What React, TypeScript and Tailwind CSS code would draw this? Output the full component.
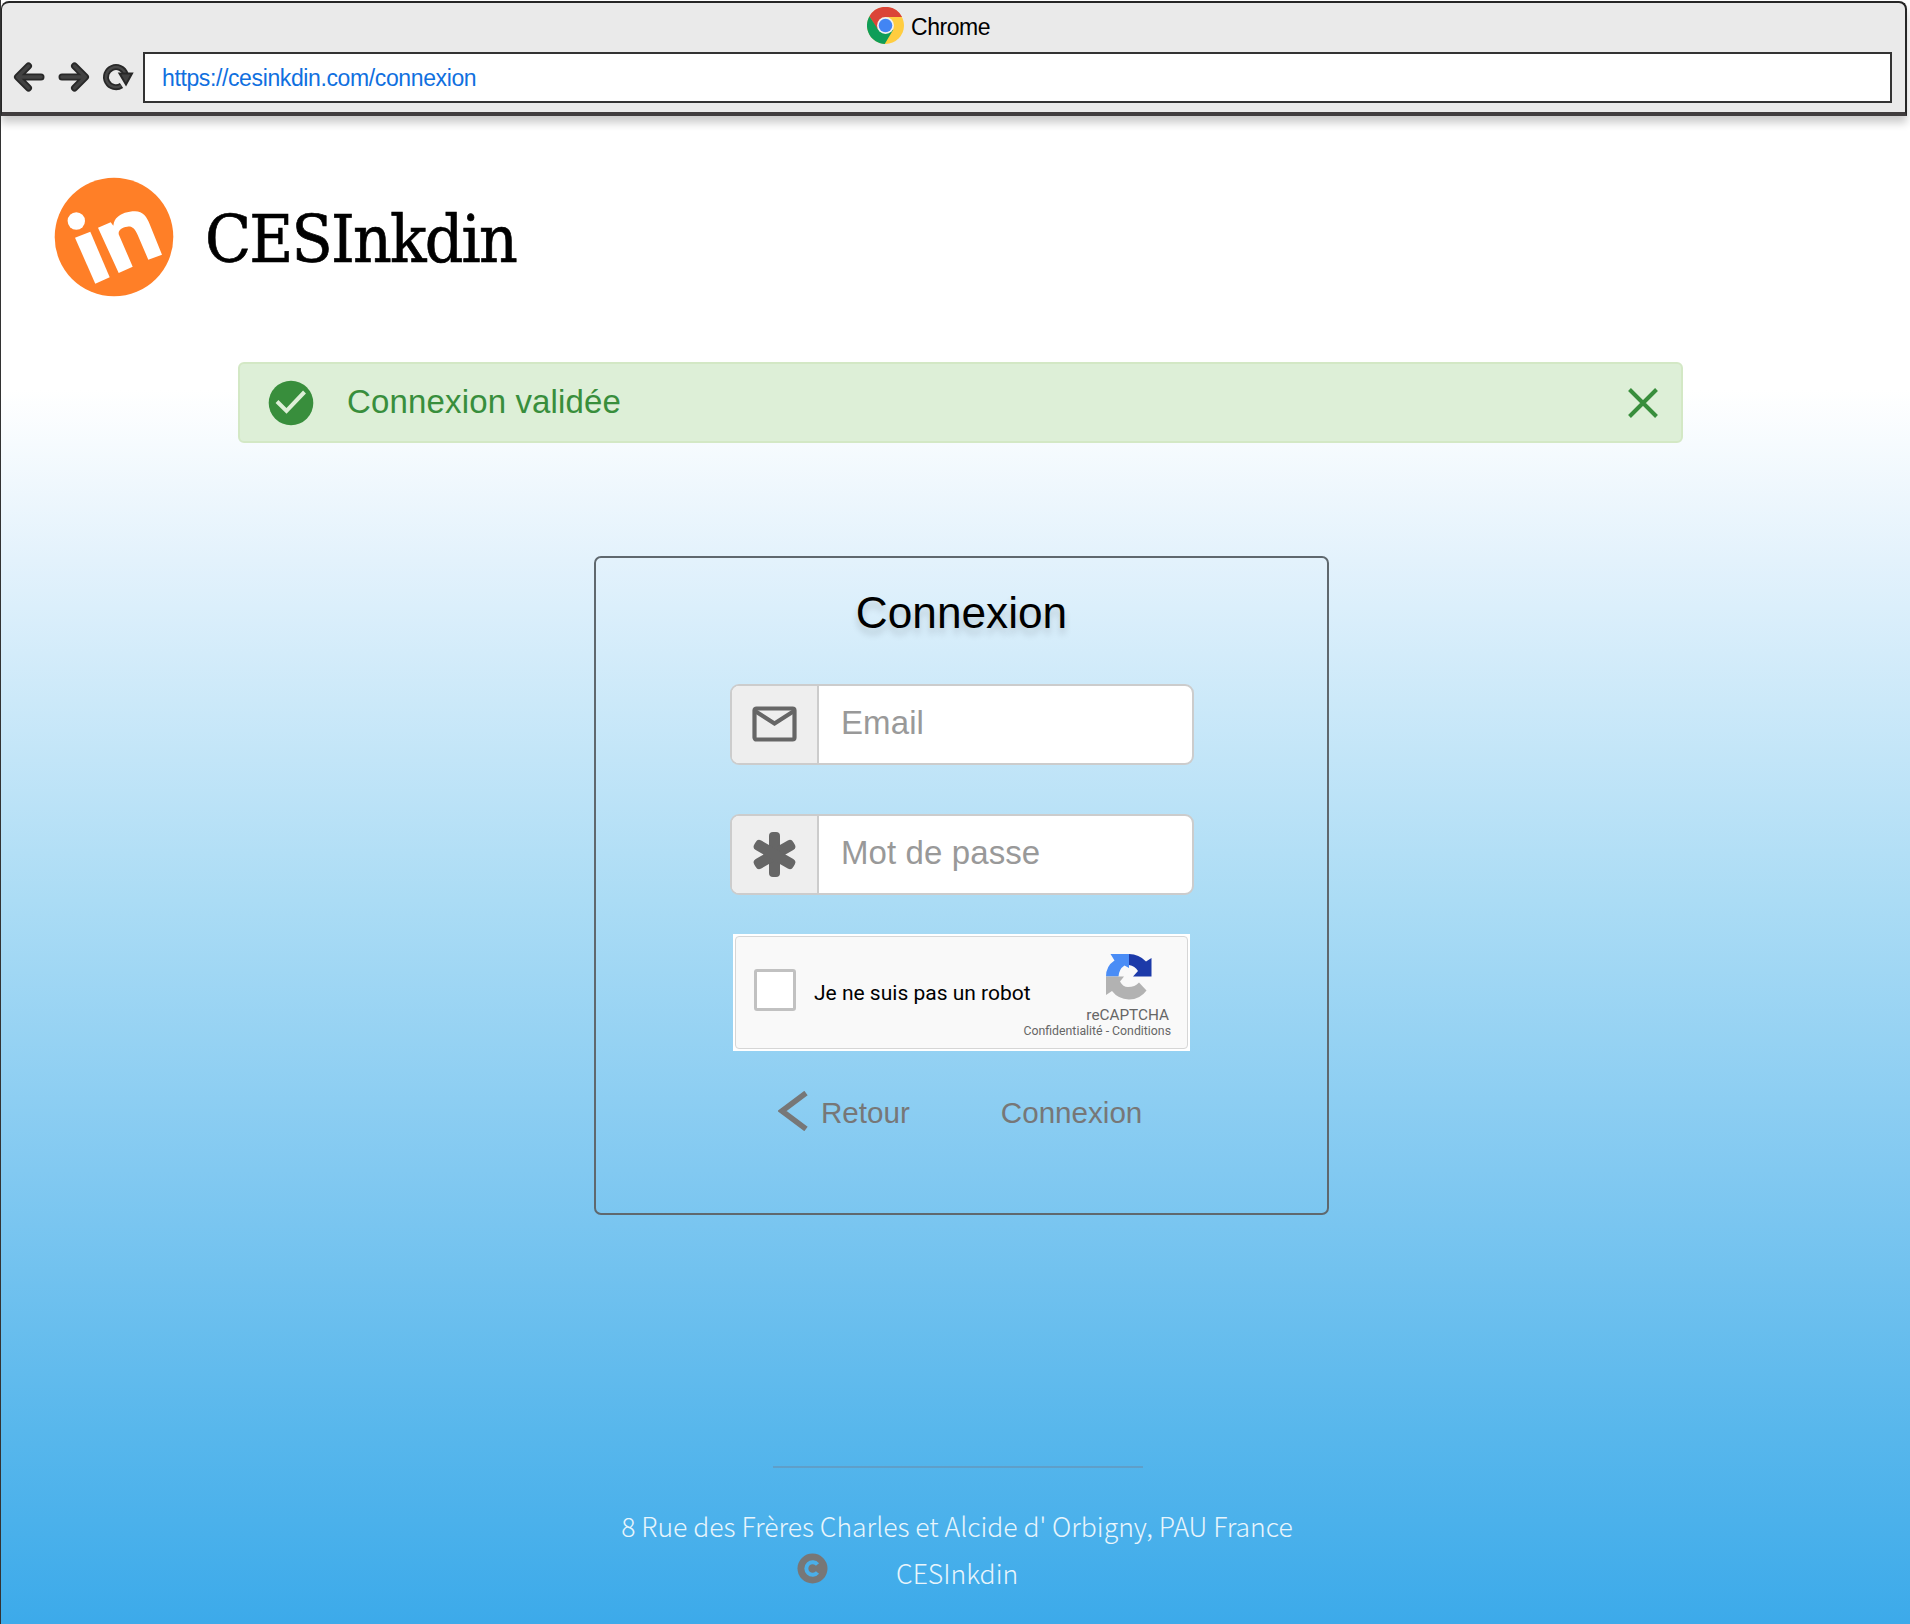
import React from 'react';

function ChromeLogo() {
  return (
    <svg className="h-[37px] w-[37px] shrink-0" viewBox="0 0 48 48">
      <circle cx="24" cy="24" r="24" fill="#ffcd40" />
      <path d="M24 24 L24 13 L45.5 13 A24 24 0 0 0 3.2 12 L14 30 Z" fill="#db4437" />
      <path d="M3.2 12 A24 24 0 0 0 23 48 L34 29.5 L24 24 L14.5 29.5 Z" fill="#0f9d58" />
      <circle cx="24" cy="24" r="11" fill="#f1f1f1" />
      <circle cx="24" cy="24" r="8.8" fill="#4285f4" />
    </svg>
  );
}

function Arrow({ flip = false }: { flip?: boolean }) {
  return (
    <svg className={flip ? 'h-[32px] w-[32px] -scale-x-100' : 'h-[32px] w-[32px]'} viewBox="0 0 32 32" fill="none" strokeLinecap="round" strokeLinejoin="round">
      <path d="M28 16H5M15.500 5L4.500 16L15.500 27" stroke="#282828" strokeWidth="7" />
      <path d="M28 16H6M15.500 5L4.500 16L15.500 27" stroke="#424242" strokeWidth="3.500" />
    </svg>
  );
}

function Reload() {
  return (
    <svg className="-ml-[2px] h-[32px] w-[32px] overflow-visible" viewBox="0 0 32 32" fill="none">
      <path d="M20.500 24.500 A10 10 0 1 1 24.500 13" stroke="#282828" strokeWidth="6" />
      <path d="M20 24.700 A10 10 0 1 1 24.500 13" stroke="#484848" strokeWidth="2.400" />
      <path d="M18.500 12.500H31L25 23.500Z" fill="#424242" stroke="#282828" strokeWidth="2" />
    </svg>
  );
}

function BrowserBar() {
  return (
    <header className="mr-[3px] mt-px flex h-[115px] flex-col rounded-t-[8px] border-2 border-b-4 border-l border-[#262626] border-b-[#403d3e] bg-[#eaeaea] shadow-[0_7px_9px_rgba(0,0,0,0.2)]">
      <div className="flex h-[49px] items-center pl-[865px]">
        <div className="flex -translate-y-[2px] items-center">
          <ChromeLogo />
          <span className="ml-[7px] translate-y-[2px] text-[23px] tracking-[-0.450px] text-black">Chrome</span>
        </div>
      </div>
      <div className="flex items-center pl-[11px]">
        <div className="flex w-[130px] -translate-y-px items-center gap-[13px]">
          <Arrow />
          <Arrow flip />
          <Reload />
        </div>
        <div className="flex h-[51px] w-[1749px] items-center border-2 border-[#333] bg-white pl-[17px]">
          <span className="translate-y-px text-[23px] tracking-[-0.380px] text-[#1070df]">https://cesinkdin.com/connexion</span>
        </div>
      </div>
    </header>
  );
}

function Brand() {
  return (
    <div className="ml-[53px] mt-[61px] flex h-[120px] items-center">
      <svg className="h-[120px] w-[120px]" viewBox="0 0 120 120">
        <circle cx="60" cy="60" r="59.300" fill="#ff7f27" />
        <circle cx="22.3" cy="44" r="8.700" fill="#fff" />
        <path fill="#fff" d="M21 60.7 L36.3 54.7 L55.7 100.3 L41.3 106.7 Z" />
        <path fill="#fff" d="M44 50.7 L56.7 45.3 L59.3 48.7 C60 44 61.500 42 63.3 40.3 C67 36.500 74 34.3 81 34.3 C89 34.3 93 40 96 48 L108 77.7 L94.3 82.7 L83.7 58 C81 51.500 78 49 73.3 49.7 C67 50.500 63.500 54 65 58 L78.7 89.7 L64.7 96 Z" />
      </svg>
      <div className="ml-[31px] w-[320px] translate-y-[3px]">
        <h1 className="origin-left scale-x-[0.914] whitespace-nowrap font-['DejaVu_Serif'] text-[66px] leading-none tracking-[-2px] text-black [-webkit-text-stroke:0.7px_black]">CESInkdin</h1>
      </div>
    </div>
  );
}

function Alert() {
  return (
    <div className="ml-[237px] mt-[65px] flex h-[81px] w-[1445px] items-center rounded-[6px] border-2 border-[#d3e8c5] bg-[#ddefd7] pl-[27px] pr-[22px] text-[#388e3c]">
      <svg className="h-[48px] w-[48px]" viewBox="0 0 48 48">
        <circle cx="24" cy="24" r="22.300" fill="#388e3c" />
        <path d="M10 22.500L19.500 32L37.500 13" fill="none" stroke="#ddefd7" strokeWidth="4" />
      </svg>
      <span className="ml-[32px] -translate-y-px text-[33px] tracking-[0.150px]">Connexion validée</span>
      <svg className="ml-auto h-[32px] w-[32px]" viewBox="0 0 32 32">
        <path d="M2.500 2.500L29.500 29.500M29.500 2.500L2.500 29.500" stroke="#388e3c" strokeWidth="4" />
      </svg>
    </div>
  );
}

function Field({ icon, label }: { icon: React.ReactNode; label: string }) {
  return (
    <div className="ml-[134px] flex h-[81px] w-[464px] overflow-hidden rounded-[9px] border-2 border-[#ccc] bg-white">
      <div className="flex w-[87px] items-center justify-center border-r-2 border-[#ccc] bg-[#eee] pb-px pr-px">{icon}</div>
      <span className="ml-[22px] self-center pb-[3px] text-[33px] tracking-[0.100px] text-[#999]">{label}</span>
    </div>
  );
}

function Captcha() {
  return (
    <div className="ml-[137px] mt-[39px] h-[117px] w-[457px] bg-white p-[2px]">
      <div className="flex h-full rounded-[4px] border border-[#d6d6d6] bg-[#f9f9f9] pl-[18px]">
        <div className="mt-[32px] h-[42px] w-[42px] shrink-0 rounded-[3px] border-[3px] border-[#c1c1c1] bg-white" />
        <span className="ml-[18px] mt-[41px] w-[220px] shrink-0 whitespace-nowrap font-[Roboto] text-[21px] leading-[30px] text-black">Je ne suis pas un robot</span>
        <div className="ml-auto flex w-0 flex-col items-end pt-[16px] font-[Roboto] text-[#666]">
          <svg className="mr-[35px] h-[47px] w-[46px] shrink-0" viewBox="0 0 46 47">
            <path fill="#4a8df6" d="M4.500 1H23V15L18.500 12.500Q13 16 12.500 23.500H0Q0 13 8.500 7.500Z" />
            <path fill="#1c3aa9" d="M23 1Q33 1 40 8.500L45.500 5V23.500H27L32 18Q29 13 23 12Z" />
            <path fill="#b2b2b2" d="M0 23.500H18L14 28.500Q17 34 22 34Q29 34 33 29.500L40.500 37.500Q34 46.500 23 46.500Q12 46 6 38L0 42Z" />
          </svg>
          <span className="mr-[18px] mt-[6px] text-[15.300px] leading-[18px]">reCAPTCHA</span>
          <span className="mr-[16px] whitespace-nowrap text-[12.300px] leading-[15px]">Confidentialité - Conditions</span>
        </div>
      </div>
    </div>
  );
}

function LoginCard() {
  return (
    <section className="ml-[593px] mt-[113px] h-[659px] w-[735px] rounded-[7px] border-2 border-[#5f686e]">
      <h2 className="mt-[30px] text-center text-[44.200px] leading-[50px] text-black [text-shadow:0_6px_7px_rgba(0,0,0,0.17)]">Connexion</h2>
      <div className="mt-[46px] flex flex-col gap-[49px]">
        <Field
          label="Email"
          icon={
            <svg className="h-[36px] w-[45px]" viewBox="0 0 45 36" fill="none" stroke="#666" strokeWidth="4.200">
              <rect x="2.500" y="2.500" width="40" height="31" rx="2" />
              <path d="M3 5L22.500 17.500L42 5" />
            </svg>
          }
        />
        <Field
          label="Mot de passe"
          icon={
            <svg className="h-[45px] w-[43px]" viewBox="0 0 43 45">
              <g fill="#666">
                <rect x="16" y="0" width="11" height="45" rx="4" />
                <rect x="16" y="0" width="11" height="45" rx="4" transform="rotate(60 21.500 22.500)" />
                <rect x="16" y="0" width="11" height="45" rx="4" transform="rotate(-60 21.500 22.500)" />
              </g>
            </svg>
          }
        />
      </div>
      <Captcha />
      <div className="mt-[42px] flex items-center pl-[182px] text-[29.600px] leading-[40px] text-[#777]">
        <svg className="h-[40px] w-[31px] -translate-y-[2px]" viewBox="0 0 31 40">
          <path d="M28 2L4 20L28 38" fill="none" stroke="#777" strokeWidth="5.500" />
        </svg>
        <span className="ml-[12px]">Retour</span>
        <span className="ml-[91px]">Connexion</span>
      </div>
    </section>
  );
}

function Footer() {
  return (
    <footer className="mt-[251px] font-['Noto_Sans_CJK_SC',sans-serif] text-[26.550px] font-light leading-[40px] text-[#e8f5fc]">
      <hr className="ml-[772px] w-[370px] border-t-2 border-[#5f9fc9]" />
      <div className="mt-[38px] w-[1912px] text-center">8 Rue des Frères Charles et Alcide d' Orbigny, PAU France</div>
      <div className="mt-[7px] flex pl-[796px]">
        <svg className="h-[31px] w-[31px]" viewBox="0 0 31 31">
          <circle cx="15.500" cy="15.500" r="15" fill="#777" />
          <path d="M20.500 11.500A6.300 6.300 0 1 0 20.500 19.500" fill="none" stroke="#4aafe9" strokeWidth="4" />
        </svg>
        <span className="ml-[68px]">CESInkdin</span>
      </div>
    </footer>
  );
}

export default function App() {
  return (
    <main className="h-[1624px] w-[1910px] overflow-hidden border-l border-[#333] bg-[linear-gradient(180deg,#fff_0px,#fff_390px,#e3f2fc_560px,#abdcf5_900px,#82c9f1_1170px,#58b7ec_1430px,#3caaea_1624px)] font-['Liberation_Sans',Arial,sans-serif]">
      <BrowserBar />
      <Brand />
      <Alert />
      <LoginCard />
      <Footer />
    </main>
  );
}
